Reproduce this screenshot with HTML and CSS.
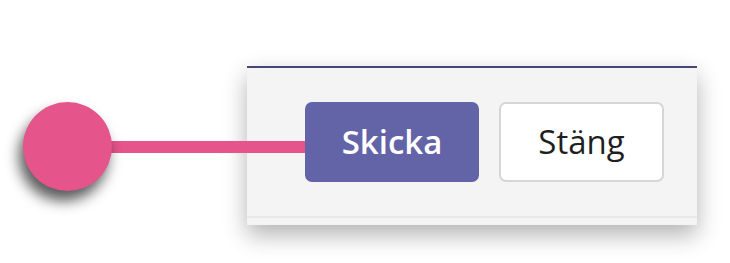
FILE: index.html
```html
<!DOCTYPE html>
<html lang="sv">
<head>
<meta charset="utf-8">
<title>Skicka</title>
<link rel="stylesheet" href="styles.css">
</head>
<body>
<div class="stage">
  <div class="panel">
    <div class="actions">
      <button class="btn btn-primary">Skicka</button>
      <button class="btn btn-secondary">Stäng</button>
    </div>
    <div class="footer"></div>
  </div>
  <div class="pointer">
    <span class="dot"></span>
    <span class="stem"></span>
  </div>
</div>
</body>
</html>
```
FILE: styles.css
```css
html, body {
  margin: 0;
  padding: 0;
  background: #ffffff;
}
.stage {
  position: relative;
  width: 730px;
  height: 263px;
  overflow: hidden;
  padding-top: 66px;
  box-sizing: border-box;
}
.panel {
  margin-left: 247px;
  width: 450px;
  background: #f4f4f4;
  border-top: 2px solid #464775;
  box-shadow: 0 10px 22px rgba(0, 0, 0, 0.3);
}
.actions {
  display: flex;
  justify-content: flex-end;
  gap: 20px;
  padding: 34px 33px 34px 0;
}
.btn {
  height: 80px;
  border-radius: 7px;
  font-family: "Open Sans", "Noto Sans", sans-serif;
  font-size: 33px;
  line-height: 1;
  padding: 0 0 2px;
  cursor: pointer;
}
.btn-primary {
  width: 174px;
  background: #6264a7;
  color: #ffffff;
  border: none;
  font-weight: 600;
}
.btn-secondary {
  width: 165px;
  background: #ffffff;
  color: #1f1f1f;
  border: 2px solid #d6d6d6;
  font-weight: 500;
}
.footer {
  height: 7px;
  border-top: 2px solid #e9e9e9;
  background: #f4f4f4;
}
.pointer {
  position: absolute;
  left: 23px;
  top: 102px;
  display: flex;
  align-items: center;
}
.dot {
  display: block;
  width: 89px;
  height: 89px;
  border-radius: 50%;
  background: #e5548b;
  box-shadow: -4px 10px 14px rgba(0, 0, 0, 0.65);
  position: relative;
  z-index: 1;
}
.stem {
  display: block;
  width: 205px;
  height: 12px;
  margin-left: -12px;
  background: #e5548b;
}
```
